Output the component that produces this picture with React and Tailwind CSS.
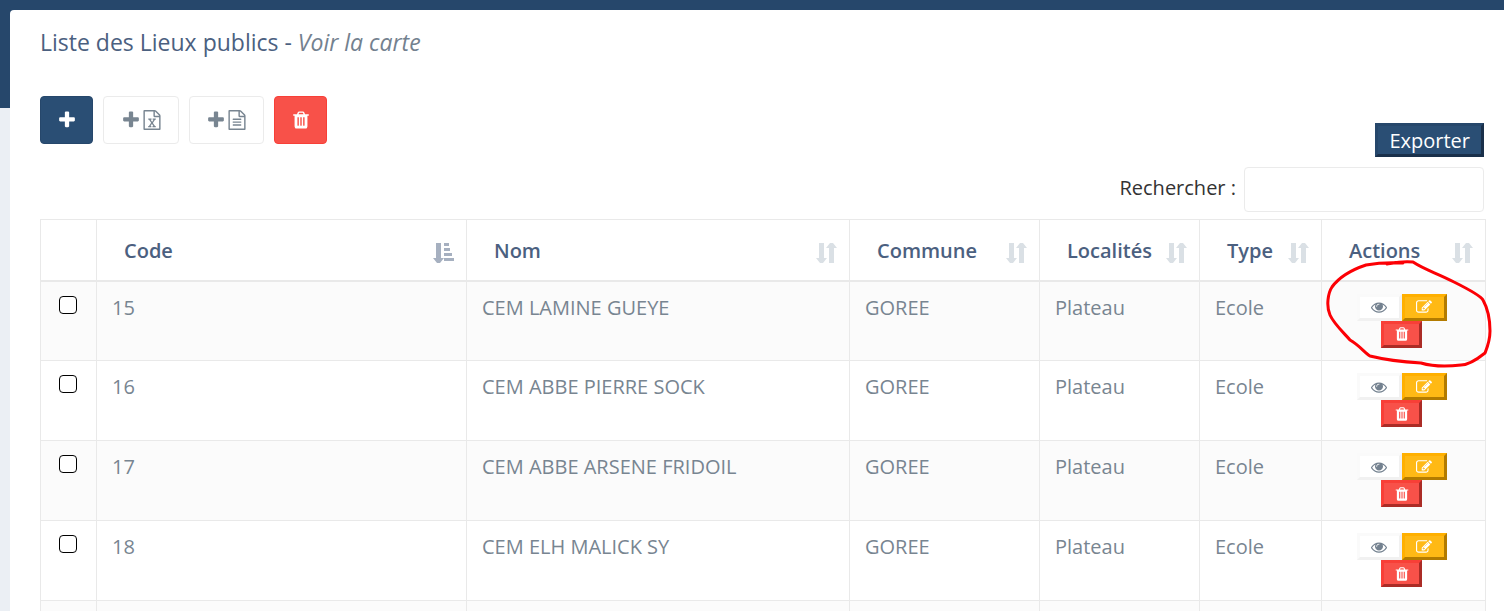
import { useState } from 'react';

const PATHS = {
  plus: 'M1600 736v192q0 40-28 68t-68 28h-416v416q0 40-28 68t-68 28h-192q-40 0-68-28t-28-68v-416h-416q-40 0-68-28t-28-68v-192q0-40 28-68t68-28h416v-416q0-40 28-68t68-28h192q40 0 68 28t28 68v416h416q40 0 68 28t28 68z',
  trash: 'M704 1376v-704q0-14-9-23t-23-9h-64q-14 0-23 9t-9 23v704q0 14 9 23t23 9h64q14 0 23-9t9-23zm256 0v-704q0-14-9-23t-23-9h-64q-14 0-23 9t-9 23v704q0 14 9 23t23 9h64q14 0 23-9t9-23zm256 0v-704q0-14-9-23t-23-9h-64q-14 0-23 9t-9 23v704q0 14 9 23t23 9h64q14 0 23-9t9-23zm-544-992h448l-48-117q-7-9-17-11h-317q-10 2-17 11zm928 32v64q0 14-9 23t-23 9h-96v948q0 83-47 143.5t-113 60.5h-832q-66 0-113-58.5t-47-141.5v-952h-96q-14 0-23-9t-9-23v-64q0-14 9-23t23-9h309l70-167q15-37 54-63t79-26h320q40 0 79 26t54 63l70 167h309q14 0 23 9t9 23z',
  eye: 'M1664 960q-152-236-381-353 61 104 61 225 0 185-131.5 316.5t-316.5 131.5-316.5-131.5-131.5-316.5q0-121 61-225-229 117-381 353 133 205 333.5 326.5t434.5 121.5 434.5-121.5 333.5-326.5zm-720-384q0-20-14-34t-34-14q-125 0-214.5 89.5t-89.5 214.5q0 20 14 34t34 14 34-14 14-34q0-86 61-147t147-61q20 0 34-14t14-34zm848 384q0 34-20 69-140 230-376.5 368.5t-499.5 138.5-499.5-139-376.5-368q-20-35-20-69t20-69q140-229 376.5-368t499.5-139 499.5 139 376.5 368q20 35 20 69z',
  edit: 'M888 1184l116-116-152-152-116 116v56h96v96h56zm440-720q-16-16-33 1l-350 350q-17 17-1 33t33-1l350-350q17-17 1-33zm80 594v190q0 119-84.5 203.5t-203.5 84.5h-832q-119 0-203.5-84.5t-84.5-203.5v-832q0-119 84.5-203.5t203.5-84.5h832q63 0 117 25 15 7 18 23 3 17-9 29l-49 49q-14 14-32 8-23-6-45-6h-832q-66 0-113 47t-47 113v832q0 66 47 113t113 47h832q66 0 113-47t47-113v-126q0-13 9-22l64-64q15-15 35-7t20 29zm-96-738l288 288-672 672h-288v-288zm444 132l-92 92-288-288 92-92q28-28 68-28t68 28l152 152q28 28 28 68t-28 68z',
  excel: 'M1596 380q28 28 48 76t20 88v1152q0 40-28 68t-68 28h-1344q-40 0-68-28t-28-68v-1600q0-40 28-68t68-28h896q40 0 88 20t76 48zm-444-244v376h376q-10-29-22-41l-313-313q-12-12-41-22zm384 1528v-1024h-416q-40 0-68-28t-28-68v-416h-768v1536h1280zm-979-234v106h281v-106h-75l103-161q5-7 10-16.5t7.5-13.5 3.5-4h2q1 4 5 10 2 4 4.5 7.5t6 8 6.5 8.5l107 161h-76v106h291v-106h-68l-192-273 195-282h67v-107h-279v107h74l-103 159q-4 7-10 16.5t-9 13.5l-2 3h-2q-1-4-5-10-6-11-17-23l-106-159h76v-107h-290v107h68l189 272-194 283h-68z',
  file: 'M1596 380q28 28 48 76t20 88v1152q0 40-28 68t-68 28h-1344q-40 0-68-28t-28-68v-1600q0-40 28-68t68-28h896q40 0 88 20t76 48zm-444-244v376h376q-10-29-22-41l-313-313q-12-12-41-22zm384 1528v-1024h-416q-40 0-68-28t-28-68v-416h-768v1536h1280zm-1024-864q0-14 9-23t23-9h704q14 0 23 9t9 23v64q0 14-9 23t-23 9h-704q-14 0-23-9t-9-23v-64zm736 224q14 0 23 9t9 23v64q0 14-9 23t-23 9h-704q-14 0-23-9t-9-23v-64q0-14 9-23t23-9h704zm0 256q14 0 23 9t9 23v64q0 14-9 23t-23 9h-704q-14 0-23-9t-9-23v-64q0-14 9-23t23-9h704z',
};

const Icon = ({ name, className }) => (
  <svg viewBox="0 0 1792 1792" fill="currentColor" aria-hidden="true" className={className}>
    <path d={PATHS[name]} />
  </svg>
);

const SortIcon = ({ active }) => (
  <svg viewBox="0 0 21 20" aria-hidden="true" className={`mt-1 h-5 w-[21px] shrink-0 ${active ? 'text-[#a6b0c0]' : 'text-[#dae0e5]'}`} fill="currentColor">
    <path d="M3 0h5v15h3l-4 5h-3l-4-5h3z" />
    {active
      ? <path d="M11 0h5v3h-5zM11 5h6v3h-6zM11 10h8v3h-8zM11 15h10v3h-10z" />
      : <path d="M13 20h5v-15h3l-4-5h-3l-4 5h3z" />}
  </svg>
);

const COLUMNS = ['Code', 'Nom', 'Commune', 'Localités', 'Type', 'Actions'];

const ROWS = [
  { code: 15, nom: 'CEM LAMINE GUEYE', commune: 'GOREE', localite: 'Plateau', type: 'Ecole' },
  { code: 16, nom: 'CEM ABBE PIERRE SOCK', commune: 'GOREE', localite: 'Plateau', type: 'Ecole' },
  { code: 17, nom: 'CEM ABBE ARSENE FRIDOIL', commune: 'GOREE', localite: 'Plateau', type: 'Ecole' },
  { code: 18, nom: 'CEM ELH MALICK SY', commune: 'GOREE', localite: 'Plateau', type: 'Ecole' },
];

const RowActions = () => (
  <div className="flex flex-wrap justify-center">
    <button type="button" aria-label="Voir" className="flex h-[27px] w-[45px] items-center justify-center border-[3px] border-t-[#fafafa] border-l-[#fafafa] border-r-[#f1f1f1] border-b-[#f1f1f1] bg-white text-[#73818f]">
      <Icon name="eye" className="size-4" />
    </button>
    <button type="button" aria-label="Modifier" className="flex h-[27px] w-[45px] items-center justify-center border-[3px] border-t-[#ffb000] border-l-[#ffb000] border-r-[#b37b00] border-b-[#b37b00] bg-[#ffb915] text-white">
      <Icon name="edit" className="size-4" />
    </button>
    <button type="button" aria-label="Supprimer" className="flex h-[27px] w-[41px] items-center justify-center border-[3px] border-t-[#f83f37] border-l-[#f83f37] border-r-[#ab2c26] border-b-[#ab2c26] bg-[#f85149] text-white">
      <Icon name="trash" className="size-4" />
    </button>
  </div>
);

// Tracé rouge à main levée autour des boutons de la première ligne
const Scribble = () => (
  <svg viewBox="0 0 170 112" fill="none" aria-hidden="true" className="pointer-events-none absolute -top-[25px] left-[2px] z-10 h-28 w-[170px]">
    <path
      d="M63 7C69 6 76 4 89 5C101 13 113 16 130 25C146 33 157 39 159 43C164 52 166 64 166 74C166 84 163 91 161 96C151 104 144 108 137 108C121 110 107 109 97 106C80 105 62 103 46 99C41 96 35 88 26 83C20 76 10 67 6 58C2 49 4 36 8 30C16 19 30 12 42 8C53 6 63 5 79 6"
      stroke="#fc0005" strokeWidth="3" strokeLinecap="round" strokeLinejoin="round"
    />
  </svg>
);

export default function App() {
  const [search, setSearch] = useState('');
  const q = search.trim().toLowerCase();
  const rows = q ? ROWS.filter(r => r.nom.toLowerCase().includes(q)) : ROWS;

  return (
    <div className="h-screen overflow-hidden bg-[linear-gradient(#26476b_108px,#ebeff4_108px)] pt-[10px] pl-[10px] font-['Open_Sans',sans-serif] text-xl">
      <main className="min-h-full rounded-tl bg-white pt-4 pr-[18px] pl-[30px]">
        <h1 className="text-[23px] leading-8 text-[#4b6080]">
          Liste des Lieux publics - <a href="#carte" className="text-[#73818f] italic">Voir la carte</a>
        </h1>

        <div className="mt-[38px] flex items-start justify-between pr-0.5">
          <div className="flex gap-[10px]">
            <button type="button" aria-label="Ajouter" className="flex h-12 w-[53px] items-center justify-center rounded border border-[#26476b] bg-[#2a4e74] text-white">
              <Icon name="plus" className="size-5" />
            </button>
            <button type="button" aria-label="Importer un fichier Excel" className="flex h-12 w-[76px] items-center justify-center gap-px rounded border border-[#ebebeb] bg-white text-[#788591]">
              <Icon name="plus" className="size-5" />
              <Icon name="excel" className="size-5" />
            </button>
            <button type="button" aria-label="Importer un fichier texte" className="flex h-12 w-[75px] items-center justify-center gap-px rounded border border-[#ebebeb] bg-white text-[#788591]">
              <Icon name="plus" className="size-5" />
              <Icon name="file" className="size-5" />
            </button>
            <button type="button" aria-label="Supprimer la sélection" className="flex h-12 w-[53px] items-center justify-center rounded border border-[#f83f37] bg-[#f85149] text-white">
              <Icon name="trash" className="size-5" />
            </button>
          </div>

          <div className="mt-[27px] flex flex-col items-end gap-[10px]">
            <button type="button" className="h-[34px] border-[3px] border-t-[#26476b] border-l-[#26476b] border-r-[#1a304a] border-b-[#1a304a] bg-[#2a4e74] px-[11px] pt-px leading-7 text-white">
              Exporter
            </button>
            <div className="flex items-center gap-2">
              <label htmlFor="recherche" className="pb-1 text-[#333]">Rechercher :</label>
              <input id="recherche" type="search" value={search} onChange={e => setSearch(e.target.value)}
                className="h-[45px] w-60 rounded border border-[#ebebeb] bg-white px-3 text-[#333] outline-none" />
            </div>
          </div>
        </div>

        <table className="mt-[7px] w-full table-fixed border-collapse text-[#788591]">
          <colgroup>
            <col className="w-14" />
            <col />
            <col className="w-[383px]" />
            <col className="w-[190px]" />
            <col className="w-40" />
            <col className="w-[122px]" />
            <col className="w-[164px]" />
          </colgroup>
          <thead>
            <tr className="h-[61px]">
              <th className="border border-b-2 border-[#e9e9e9]" />
              {COLUMNS.map((name, i) => (
                <th key={name} scope="col" className="border border-b-2 border-[#e9e9e9] pt-0.5 pr-3 pl-[27px] text-left font-semibold text-[#4b6080]">
                  <div className="flex items-center justify-between">
                    {name}
                    <SortIcon active={i === 0} />
                  </div>
                </th>
              ))}
            </tr>
          </thead>
          <tbody>
            {rows.map((row, i) => (
              <tr key={row.code} className="h-20 align-top odd:bg-[#fbfbfb]">
                <td className="border border-[#e9e9e9] pt-[14px] pr-0.5">
                  <input type="checkbox" aria-label={`Sélectionner ${row.nom}`}
                    className="mx-auto block size-[18px] appearance-none rounded border border-black bg-white checked:bg-[#2a4e74]" />
                </td>
                {[row.code, row.nom, row.commune, row.localite, row.type].map((value, j) => (
                  <td key={j} className="border border-[#e9e9e9] px-[15px] pt-3 leading-7">{value}</td>
                ))}
                <td className="relative border border-[#e9e9e9] pt-3 pr-9 pl-8">
                  <RowActions />
                  {i === 0 && <Scribble />}
                </td>
              </tr>
            ))}
            <tr className="h-20 odd:bg-[#fbfbfb]">
              {['', ...COLUMNS].map(name => <td key={name} className="border border-[#e9e9e9]" />)}
            </tr>
          </tbody>
        </table>
      </main>
    </div>
  );
}
